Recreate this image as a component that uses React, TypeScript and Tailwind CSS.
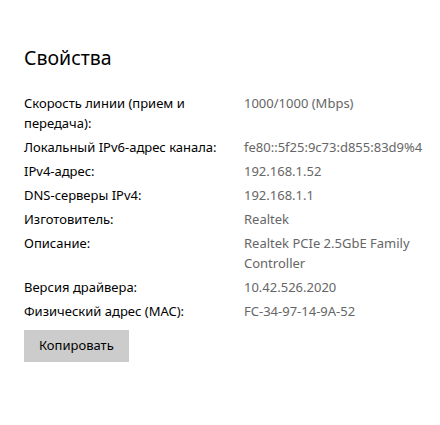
const rows: [string, string][] = [
  ['Скорость линии (прием и передача):', '1000/1000 (Mbps)'],
  ['Локальный IPv6-адрес канала:', 'fe80::5f25:9c73:d855:83d9%4'],
  ['IPv4-адрес:', '192.168.1.52'],
  ['DNS-серверы IPv4:', '192.168.1.1'],
  ['Изготовитель:', 'Realtek'],
  ['Описание:', 'Realtek PCIe 2.5GbE Family Controller'],
  ['Версия драйвера:', '10.42.526.2020'],
  ['Физический адрес (MAC):', 'FC-34-97-14-9A-52'],
];

export default function App() {
  return (
    <div className="w-[440px] h-[425px] bg-white px-6 pt-[44px] font-['Noto_Sans',sans-serif] text-black">
      <h1 className="text-[19.5px] leading-7 font-normal">Свойства</h1>

      <div className="mt-[21px] grid grid-cols-[200px_1fr] gap-x-5 gap-y-1 text-[13px] leading-[20px]">
        {rows.map(([label, value]) => (
          <div key={label} className="contents">
            <div>{label}</div>
            <div className="text-[#666666]">{value}</div>
          </div>
        ))}
      </div>

      <button className="mt-[9px] bg-[#cccccc] px-[15px] h-8 text-[13px] text-black">
        Копировать
      </button>
    </div>
  );
}
